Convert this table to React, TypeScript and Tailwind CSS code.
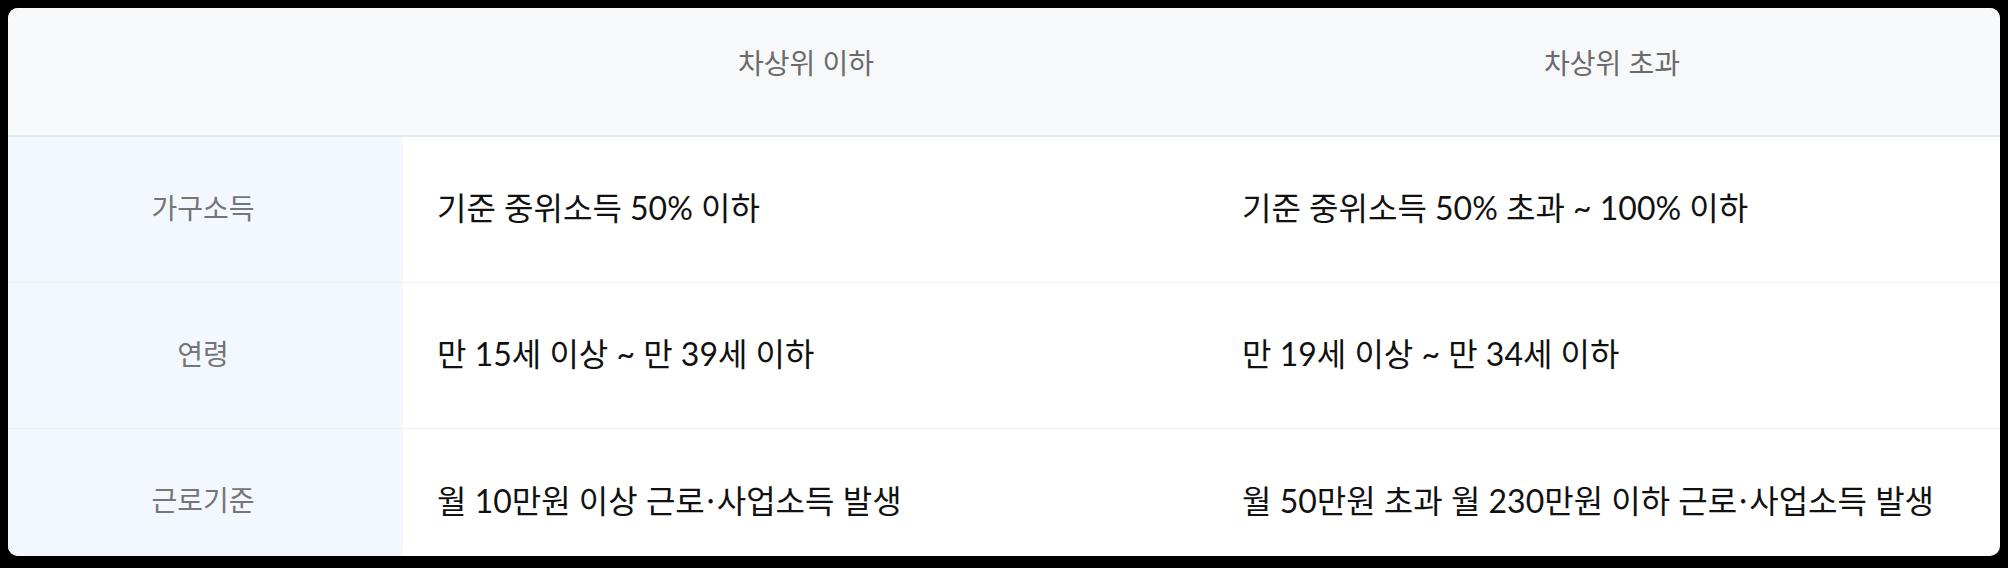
import React from "react";

const Dot = () => (
  <span
    className="-mx-[3px]"
    style={{ fontFamily: '"Noto Sans CJK KR", sans-serif' }}
  >
    ·
  </span>
);

const rows: { label: string; a: React.ReactNode; b: React.ReactNode }[] = [
  {
    label: "가구소득",
    a: "기준 중위소득 50% 이하",
    b: "기준 중위소득 50% 초과 ~ 100% 이하",
  },
  {
    label: "연령",
    a: "만 15세 이상 ~ 만 39세 이하",
    b: "만 19세 이상 ~ 만 34세 이하",
  },
  {
    label: "근로기준",
    a: (
      <>
        월 10만원 이상 근로
        <Dot />
        사업소득 발생
      </>
    ),
    b: (
      <>
        월 50만원 초과 월 230만원 이하 근로
        <Dot />
        사업소득 발생
      </>
    ),
  },
];

export default function App() {
  return (
    <div
      className="w-[2008px] h-[568px] bg-black p-[8px] pb-[12px]"
      style={{ fontFamily: 'Lato, "Noto Sans CJK KR", sans-serif' }}
    >
      <div className="h-full w-full overflow-hidden rounded-[10px] bg-white">
        <div className="-mt-[17px] w-[2007px]">
          <div className="grid h-[146px] grid-cols-[395px_806px_806px] border-b-2 border-[#e6e8ec] bg-[#f7f8fa] text-[28px] text-[#6b6b6b]">
            <div />
            <div className="flex items-center justify-center">차상위 이하</div>
            <div className="flex items-center justify-center">차상위 초과</div>
          </div>
          {rows.map((r, i) => (
            <div
              key={i}
              className="grid h-[146px] grid-cols-[395px_806px_806px] border-b border-[#eef0f4]"
            >
              <div className="flex items-center justify-center bg-[#f3f8ff] pr-[5px] pb-[4px] text-[28px] text-[#757575]">
                {r.label}
              </div>
              <div className="flex items-center pl-[34px] pb-[4px] text-[32px] text-[#111]">
                <span>{r.a}</span>
              </div>
              <div className="flex items-center pl-[33px] pb-[4px] text-[32px] text-[#111]">
                <span>{r.b}</span>
              </div>
            </div>
          ))}
        </div>
      </div>
    </div>
  );
}
